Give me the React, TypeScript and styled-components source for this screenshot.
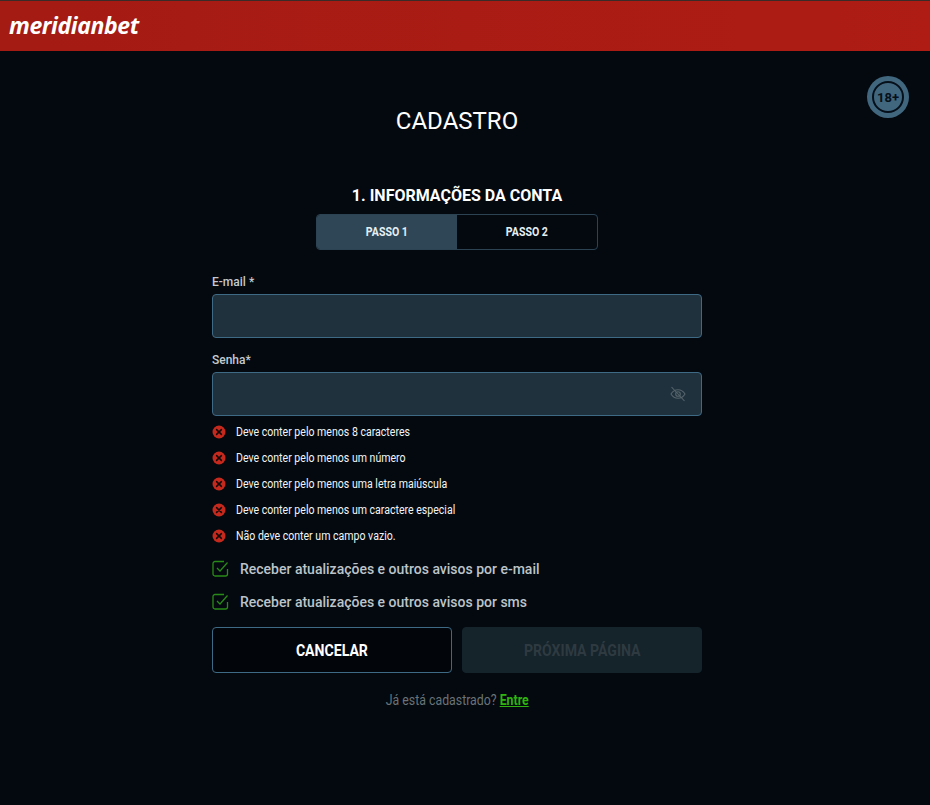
import styled, { createGlobalStyle } from 'styled-components';

const GlobalStyle = createGlobalStyle`
  html, body {
    margin: 0;
    padding: 0;
    background: #03090f;
  }
  * {
    box-sizing: border-box;
  }
`;

const Page = styled.div`
  position: relative;
  min-height: 805px;
  background: #03090f;
  font-family: Roboto, "Liberation Sans", sans-serif;
  color: #fff;
`;

const Header = styled.header`
  height: 51px;
  display: flex;
  align-items: center;
  padding-left: 9px;
  background: linear-gradient(90deg, #a41b14, #ae1c14);
  border-top: 1px solid #3a2a28;
`;

const Logo = styled.span`
  font-family: "Open Sans", sans-serif;
  font-size: 23px;
  font-weight: 700;
  font-style: italic;
  letter-spacing: -0.4px;
  color: #fff;
  line-height: 1;
  position: relative;
  top: -1px;
`;

const AgeBadge = styled.div`
  position: absolute;
  top: 76px;
  right: 21px;
  width: 42px;
  height: 42px;
  border-radius: 50%;
  background: #41677f;
  display: flex;
  align-items: center;
  justify-content: center;
`;

const AgeInner = styled.div`
  width: 32px;
  height: 32px;
  border-radius: 50%;
  border: 2px solid #06101a;
  color: #06101a;
  font-size: 13px;
  font-weight: 700;
  display: flex;
  align-items: center;
  justify-content: center;
`;

const Main = styled.main`
  display: flex;
  flex-direction: column;
  align-items: center;
  padding-right: 16px;
`;

const Title = styled.h1`
  margin: 55px 0 0;
  font-size: 24px;
  line-height: 30px;
  font-weight: 400;
`;

const StepHeading = styled.h2`
  margin: 50px 0 0;
  font-size: 16px;
  line-height: 20px;
  font-weight: 700;
`;

const Tabs = styled.div`
  display: flex;
  width: 282px;
  height: 36px;
  margin-top: 8px;
  border: 1px solid #2c4354;
  border-radius: 4px;
  overflow: hidden;
`;

const Tab = styled.div<{ $active?: boolean }>`
  width: 50%;
  display: flex;
  align-items: center;
  justify-content: center;
  font-size: 12px;
  font-weight: 700;
  color: #e6eef2;
  background: ${(p) => (p.$active ? '#2e4656' : 'transparent')};
`;

/* Roboto Condensed is not installed: Roboto narrowed to the same width */
const Condensed = styled.span<{ $origin?: string }>`
  display: inline-block;
  white-space: nowrap;
  transform: scaleX(0.88);
  transform-origin: ${(p) => p.$origin ?? 'center'};
`;

const Form = styled.form`
  width: 490px;
  margin-top: 22px;
  display: flex;
  flex-direction: column;
`;

const Label = styled.label`
  height: 20px;
  font-size: 12px;
  line-height: 20px;
  font-weight: 500;
  color: #c4cbd0;
  margin-bottom: 2px;
`;

const InputWrap = styled.div`
  position: relative;
  margin-bottom: 12px;
`;

const Input = styled.input`
  display: block;
  width: 100%;
  height: 44px;
  background: #1f313c;
  border: 1px solid #3f6a85;
  border-radius: 4px;
  outline: none;
  color: #fff;
`;

const EyeButton = styled.span`
  position: absolute;
  top: 14px;
  right: 16px;
  width: 16px;
  height: 16px;
  color: #56646c;
`;

const Requirements = styled.ul`
  list-style: none;
  margin: -9px 0 0;
  padding: 0;
`;

const Requirement = styled.li`
  height: 26px;
  display: flex;
  align-items: center;
  gap: 10px;
  font-size: 12px;
  color: #f2f5f6;
`;

const CheckRow = styled.div`
  height: 33px;
  display: flex;
  align-items: center;
  gap: 11px;
  font-size: 14px;
  font-weight: 500;
  color: #bcc4ca;
`;

const Checks = styled.div`
  margin-top: 3px;
`;

const Buttons = styled.div`
  display: grid;
  grid-template-columns: 1fr 1fr;
  gap: 10px;
  margin-top: 9px;
`;

const Button = styled.button<{ $disabled?: boolean }>`
  height: 46px;
  border-radius: 4px;
  font-family: inherit;
  font-size: 16px;
  font-weight: 700;
  border: 1px solid ${(p) => (p.$disabled ? '#15232b' : '#3f6a85')};
  background: ${(p) => (p.$disabled ? '#15232b' : '#02060b')};
  color: ${(p) => (p.$disabled ? '#2e3a40' : '#fff')};
`;

const LoginLine = styled.p`
  margin: 17px 0 0;
  text-align: center;
  font-size: 14px;
  line-height: 20px;
  color: #6a7378;
`;

const LoginLink = styled.a`
  color: #2fb30f;
  font-weight: 700;
  text-decoration: underline;
`;

const requirements = [
  'Deve conter pelo menos 8 caracteres',
  'Deve conter pelo menos um número',
  'Deve conter pelo menos uma letra maiúscula',
  'Deve conter pelo menos um caractere especial',
  'Não deve conter um campo vazio.',
];

const consents = [
  'Receber atualizações e outros avisos por e-mail',
  'Receber atualizações e outros avisos por sms',
];

function ErrorIcon() {
  return (
    <svg width="14" height="14" viewBox="0 0 14 14">
      <circle cx="7" cy="7" r="6.5" fill="#c5281c" />
      <path d="M4.6 4.6l4.8 4.8M9.4 4.6l-4.8 4.8" stroke="#14090a" strokeWidth="1.5" strokeLinecap="round" />
    </svg>
  );
}

function CheckIcon() {
  return (
    <svg width="17" height="17" viewBox="0 0 17 17" fill="none" stroke="#2a8a18" strokeWidth="1.3">
      <path d="M15.5 9v5a2 2 0 0 1-2 2H3a2 2 0 0 1-2-2V3.5a2 2 0 0 1 2-2h9" />
      <path d="M5 8l3 3 7.500-8.500" />
    </svg>
  );
}

function EyeOffIcon() {
  return (
    <svg width="16" height="16" viewBox="0 0 16 16" fill="none" stroke="currentColor" strokeWidth="1.1">
      <path d="M1 8c1.800-3 4-4.300 7-4.300S13.200 5 15 8c-1.800 3-4 4.300-7 4.300S2.800 11 1 8z" />
      <circle cx="8" cy="8" r="2.300" />
      <path d="M1.500 1l13 14" />
    </svg>
  );
}

export default function App() {
  return (
    <Page>
      <GlobalStyle />
      <Header>
        <Logo>meridianbet</Logo>
      </Header>
      <AgeBadge>
        <AgeInner>18+</AgeInner>
      </AgeBadge>
      <Main>
        <Title>CADASTRO</Title>
        <StepHeading>1. INFORMAÇÕES DA CONTA</StepHeading>
        <Tabs>
          <Tab $active><Condensed>PASSO 1</Condensed></Tab>
          <Tab><Condensed>PASSO 2</Condensed></Tab>
        </Tabs>
        <Form>
          <Label>E-mail *</Label>
          <InputWrap>
            <Input type="text" />
          </InputWrap>
          <Label>Senha*</Label>
          <InputWrap>
            <Input type="password" />
            <EyeButton>
              <EyeOffIcon />
            </EyeButton>
          </InputWrap>
          <Requirements>
            {requirements.map((text) => (
              <Requirement key={text}>
                <ErrorIcon />
                <Condensed $origin="left">{text}</Condensed>
              </Requirement>
            ))}
          </Requirements>
          <Checks>
            {consents.map((text) => (
              <CheckRow key={text}>
                <CheckIcon />
                {text}
              </CheckRow>
            ))}
          </Checks>
          <Buttons>
            <Button type="button"><Condensed>CANCELAR</Condensed></Button>
            <Button type="button" $disabled><Condensed>PRÓXIMA PÁGINA</Condensed></Button>
          </Buttons>
          <LoginLine>
            <Condensed>
              Já está cadastrado? <LoginLink href="#">Entre</LoginLink>
            </Condensed>
          </LoginLine>
        </Form>
      </Main>
    </Page>
  );
}
